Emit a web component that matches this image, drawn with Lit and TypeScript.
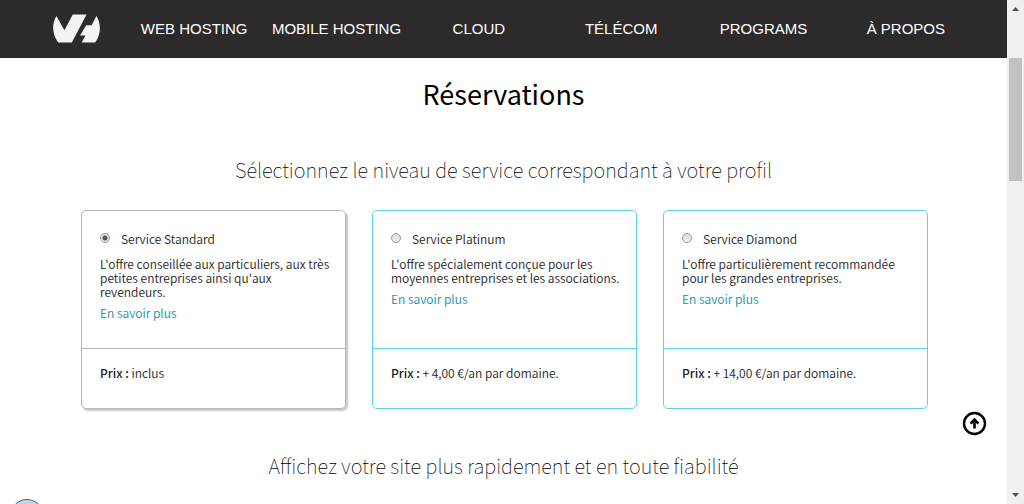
import { LitElement, html, css, svg } from "lit";
import { customElement, state } from "lit/decorators.js";
import { classMap } from "lit/directives/class-map.js";

interface Offer {
  id: string;
  name: string;
  text: string;
  price: string;
}

const MENU = ["WEB HOSTING", "MOBILE HOSTING", "CLOUD", "TÉLÉCOM", "PROGRAMS", "À PROPOS"];

const OFFERS: Offer[] = [
  {
    id: "standard",
    name: "Service Standard",
    text: "L'offre conseillée aux particuliers, aux très petites entreprises ainsi qu'aux revendeurs.",
    price: "inclus",
  },
  {
    id: "platinum",
    name: "Service Platinum",
    text: "L'offre spécialement conçue pour les moyennes entreprises et les associations.",
    price: "+ 4,00 €/an par domaine.",
  },
  {
    id: "diamond",
    name: "Service Diamond",
    text: "L'offre particulièrement recommandée pour les grandes entreprises.",
    price: "+ 14,00 €/an par domaine.",
  },
];

@customElement("site-header")
export class SiteHeader extends LitElement {
  static styles = css`
    :host {
      display: block;
      background: #2c2a2b;
    }
    .bar {
      display: flex;
      align-items: center;
      gap: 23px;
      height: 58px;
      padding: 0 30px 0 53px;
    }
    .logo {
      display: block;
      line-height: 0;
    }
    .menu {
      flex: 1;
      display: grid;
      grid-template-columns: repeat(6, 1fr);
      text-align: center;
    }
    .menu a {
      color: #fff;
      font: 15px/20px "Liberation Sans", Arial, sans-serif;
      text-decoration: none;
      white-space: nowrap;
    }
  `;

  render() {
    return html`<header class="bar">
      <a class="logo" href="#" aria-label="Accueil">
        <svg width="47" height="30" viewBox="0 0 47 30" fill="#f3f3f3">
          <path d="M3.4 2 L11.4 16.2 L19.8 0.4 H33.6 L18.8 28.4 H5.2 C-1.2 20.4 -1.2 9.4 3.4 2 Z" />
          <path d="M43.4 2 C48.2 9.4 48.2 20.4 42.2 28.4 H28.6 L32.4 21.4 H27 L33.2 11.2 H38.6 Z" />
        </svg>
      </a>
      <nav class="menu">${MENU.map((m) => html`<a href="#">${m}</a>`)}</nav>
    </header>`;
  }
}

@customElement("offer-card")
export class OfferCard extends LitElement {
  static properties = {
    offer: { attribute: false },
    selected: { type: Boolean },
  };
  declare offer: Offer;
  declare selected: boolean;

  static styles = css`
    :host {
      display: block;
    }
    .card {
      display: grid;
      grid-template-rows: 1fr auto;
      box-sizing: border-box;
      height: 100%;
      border: 1px solid #5bd1e8;
      border-radius: 5px;
      color: #222;
    }
    .card.selected {
      border-color: #b4b6ba;
      box-shadow: 2px 2px 2px #c4c6cc;
    }
    .top {
      min-height: 98px;
      padding: 19px 12px 20px 18px;
      border-bottom: 1px solid #5bd1e8;
    }
    .selected .top {
      border-color: #b4b6ba;
    }
    .choice {
      display: flex;
      align-items: center;
      gap: 11px;
      line-height: 18px;
    }
    .radio {
      appearance: none;
      box-sizing: border-box;
      width: 10px;
      height: 10px;
      margin: 0 0 2px;
      border: 1px solid #9b9b9b;
      border-radius: 50%;
      background: linear-gradient(#dcdcdc, #eee);
    }
    .radio:checked {
      background: radial-gradient(circle, #555 2px, #e6e6e6 3px);
    }
    .text {
      margin: 9px 0 7px;
    }
    .more {
      display: block;
      color: #0f8fb5;
      text-decoration: none;
    }
    .price {
      margin: 0;
      padding: 17px 18px 28px;
    }
    .price b {
      font-weight: 500;
    }
  `;

  private pick() {
    this.dispatchEvent(new CustomEvent("pick", { detail: this.offer.id }));
  }

  render() {
    const o = this.offer;
    return html`<article class=${classMap({ card: true, selected: this.selected })}>
      <div class="top">
        <label class="choice">
          <input class="radio" type="radio" name="service" .checked=${this.selected} @change=${this.pick} />
          <span>${o.name}</span>
        </label>
        <p class="text">${o.text}</p>
        <a class="more" href="#">En savoir plus</a>
      </div>
      <p class="price"><b>Prix :</b> ${o.price}</p>
    </article>`;
  }
}

@customElement("page-scrollbar")
export class PageScrollbar extends LitElement {
  static styles = css`
    :host {
      display: flex;
      flex-direction: column;
      justify-content: space-between;
      align-items: center;
      background: #f0f0f0;
    }
    .arrow {
      display: block;
    }
    .track {
      flex: 1;
      display: grid;
      grid-template-rows: 41fr 123fr 306fr;
      align-self: stretch;
    }
    .thumb {
      grid-row: 2;
      margin: 0 2px;
      background: #c1c1c1;
    }
  `;

  render() {
    const arrow = (d: string) => html`<svg class="arrow" width="17" height="17" viewBox="0 0 17 17">
      ${svg`<path d=${d} fill="#505050" />`}
    </svg>`;
    return html`${arrow("M5 11 L8.5 7 L12 11 Z")}
      <div class="track"><div class="thumb"></div></div>
      ${arrow("M5 6 L8.5 10 L12 6 Z")}`;
  }
}

@customElement("app-root")
export class AppRoot extends LitElement {
  @state() private choice = "standard";

  static styles = css`
    :host {
      display: grid;
      grid-template-columns: 1fr 17px;
      height: 100vh;
      overflow: hidden;
      background: #fff;
      font: 350 12px/14px "Noto Sans CJK SC", "Noto Sans", sans-serif;
    }
    .page {
      position: relative;
      min-width: 0;
      overflow: hidden;
    }
    h1,
    h2 {
      margin: 0;
      color: #000;
      text-align: center;
    }
    h1 {
      margin-top: 16px;
      font-size: 27px;
      font-weight: 400;
      line-height: 40px;
    }
    h2 {
      font-size: 20px;
      font-weight: 100;
      line-height: 30px;
    }
    .level {
      margin-top: 41px;
    }
    .cards {
      display: grid;
      grid-template-columns: repeat(3, 1fr);
      gap: 26px;
      margin: 25px 79px 42px 81px;
    }
    .to-top {
      position: absolute;
      right: 20px;
      bottom: 68px;
      padding: 0;
      border: 0;
      background: none;
      line-height: 0;
      cursor: pointer;
    }
    .badge {
      position: absolute;
      left: 10px;
      bottom: -29px;
      box-sizing: border-box;
      width: 34px;
      height: 34px;
      border: 1px solid #3b6a94;
      border-radius: 50%;
      background: #c3d6e8;
    }
  `;

  render() {
    return html`<div class="page">
        <site-header></site-header>
        <main>
          <h1>Réservations</h1>
          <h2 class="level">Sélectionnez le niveau de service correspondant à votre profil</h2>
          <div class="cards">
            ${OFFERS.map(
              (o) => html`<offer-card
                .offer=${o}
                .selected=${o.id === this.choice}
                @pick=${(e: CustomEvent) => (this.choice = e.detail)}
              ></offer-card>`
            )}
          </div>
          <h2>Affichez votre site plus rapidement et en toute fiabilité</h2>
        </main>
        <button class="to-top" aria-label="Haut de page">
          <svg width="25" height="25" viewBox="0 0 25 25" fill="none" stroke="#000">
            <circle cx="12.5" cy="12.5" r="10.5" stroke-width="2.4" />
            <path d="M12.5 17.5 V9 M8.6 12.6 L12.5 8.7 L16.4 12.6" stroke-width="2.6" />
          </svg>
        </button>
        <div class="badge"></div>
      </div>
      <page-scrollbar></page-scrollbar>`;
  }
}
